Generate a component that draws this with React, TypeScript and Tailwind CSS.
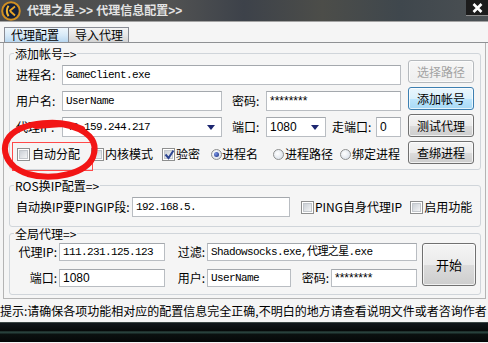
import React from "react";

// Proxy config window — title bar, two tabs, three group boxes, status line

const monoCls = "font-['Liberation_Mono','Noto_Sans_CJK_SC',monospace] text-[11px] tracking-[-0.6px] leading-none";
const sansCls = "font-['Liberation_Sans','Noto_Sans_CJK_SC',sans-serif] text-[12px] leading-none";

function Lbl({ className = "", children }: { className?: string; children: React.ReactNode }) {
  return <span className={`shrink-0 whitespace-nowrap text-[12px] leading-none text-black ${className}`}>{children}</span>;
}

function Input({
  className = "",
  text,
  font = "mono",
  arrow = false,
}: {
  className?: string;
  text: string;
  font?: "mono" | "sans";
  arrow?: boolean;
}) {
  return (
    <div
      className={`flex h-full shrink-0 items-center border border-[#b9bdc2] border-t-[#a4a8ad] bg-white pl-[3px] ${className}`}
    >
      <span className={`whitespace-nowrap ${font === "mono" ? monoCls : sansCls}`}>{text}</span>
      {arrow && (
        <svg className="ml-auto mr-[6px]" width="8" height="5" viewBox="0 0 8 5">
          <path d="M0 0 H8 L4 5 Z" fill="#1c2670" />
        </svg>
      )}
    </div>
  );
}

function Button({
  className = "",
  children,
  kind = "normal",
}: {
  className?: string;
  children: React.ReactNode;
  kind?: "normal" | "hot" | "disabled";
}) {
  const look =
    kind === "hot"
      ? "border-[#3c7fb1] bg-[linear-gradient(#eaf6fd,#d9f0fc_50%,#bee6fd_51%,#a7d9f5)] text-black"
      : kind === "disabled"
        ? "border-[#b5b9bd] bg-[linear-gradient(#f6f6f6,#efefef)] text-[#a3a3a3]"
        : "border-[#707070] bg-[linear-gradient(#f4f4f4,#ebebeb_50%,#dcdcdc_51%,#cdcdcd)] text-black";
  return (
    <div
      className={`flex shrink-0 items-center justify-center rounded-[3px] border text-[12px] leading-none shadow-[inset_0_0_0_1px_rgba(255,255,255,0.7)] ${look} ${className}`}
    >
      {children}
    </div>
  );
}

function Check({ checked = false }: { checked?: boolean }) {
  return (
    <span className="flex h-[13px] w-[13px] shrink-0 items-center justify-center border border-[#8e8f8f] bg-white">
      <span className="relative flex h-[9px] w-[9px] items-center justify-center border border-[#c3c7cc] bg-[linear-gradient(135deg,#cbd0d6,#f3f4f5)]">
        {checked && (
          <svg className="absolute -left-[1px] -top-[2px]" width="11" height="11" viewBox="0 0 11 11">
            <path d="M1.5 5.5 L4.5 9 L9.5 1.5" fill="none" stroke="#2d4592" strokeWidth="2" />
          </svg>
        )}
      </span>
    </span>
  );
}

function Radio({ on = false }: { on?: boolean }) {
  return (
    <span className="flex h-[11px] w-[11px] shrink-0 items-center justify-center rounded-full border border-[#8e8f8f] bg-[radial-gradient(circle_at_40%_40%,#ffffff,#d2dae5)]">
      {on && <span className="h-[5px] w-[5px] rounded-full bg-[radial-gradient(circle_at_35%_35%,#7b98e6,#10237a)]" />}
    </span>
  );
}

function Group({ label, className = "", children }: { label: string; className?: string; children: React.ReactNode }) {
  return (
    <div className={`rounded-[3px] border border-[#d0d5da] ${className}`}>
      <div className="-mt-[7px] ml-[4px] w-fit bg-[#f5f5f5] px-[1px] text-[12px] leading-[13px] text-black">{label}</div>
      {children}
    </div>
  );
}

export default function App() {
  return (
    <div className="relative h-[343px] w-[488px] overflow-hidden bg-[#f5f5f5] font-['Noto_Sans_CJK_SC',sans-serif] text-black">
      {/* Title bar */}
      <div className="flex h-[22px] items-center border-b border-[#a3a3a3] bg-[linear-gradient(90deg,#4c4c4c,#515252_35%,#3d424a_50%,#4c4d49_66%,#3f474d_82%,#4b5053)]">
        <svg className="ml-[1px]" width="20" height="20" viewBox="0 0 20 20">
          <circle cx="10" cy="10" r="8.8" fill="#15203a" stroke="#d08f22" strokeWidth="2" />
          <path d="M7.5 4.8 Q4.2 10 7.5 15.2" fill="none" stroke="#f2b632" strokeWidth="2" />
          <path d="M8.5 10 L14 5.5 M9 10 L14 14.5" fill="none" stroke="#e9a528" strokeWidth="1.8" />
        </svg>
        <span className="ml-[6px] whitespace-nowrap font-['Liberation_Sans','Noto_Sans_CJK_SC',sans-serif] text-[12px] font-bold leading-none text-[#e3e3e3]">
          {"代理之星->> 代理信息配置>>"}
        </span>
        <div className="ml-auto flex h-[16px] w-[22px] items-center justify-center self-start border-b border-[#8d8d8d] bg-[#1c1c1c]">
          <svg width="11" height="10" viewBox="0 0 11 10">
            <path d="M1.5 1 L9.5 9 M9.5 1 L1.5 9" stroke="#ffffff" strokeWidth="2.6" />
          </svg>
        </div>
      </div>

      {/* Tabs */}
      <div className="flex h-[21px] items-end border-b border-[#8f9194] pl-[4px]">
        <div className="flex h-[15px] w-[65px] items-center border border-b-0 border-[#898c95] bg-[linear-gradient(#eef6fc,#d8eaf8_50%,#b9d7f0)] pl-[6px] text-[12px] leading-none">
          代理配置
        </div>
        <div className="flex h-[15px] w-[60px] items-center border border-b-0 border-l-0 border-[#898c95] bg-[linear-gradient(#f4f4f4,#e7e7e7_50%,#d3d3d3)] pl-[6px] text-[12px] leading-none">
          导入代理
        </div>
      </div>

      {/* Panel */}
      <div className="ml-[3px] w-[483px] border-x border-b border-[#b4b4b4] pb-[3px] pl-[5px] pr-[4px] pt-[10px]">
        <Group label="添加帐号=>">
          <div className="flex pb-[5px] pl-[6px] pr-[5px]">
            <div className="mt-[5px] flex w-[385px] flex-col gap-[6px]">
              <div className="flex h-[20px] items-center">
                <Lbl className="w-[46px]">进程名:</Lbl>
                <Input className="w-[339px]" text="GameClient.exe" />
              </div>
              <div className="flex h-[20px] items-center">
                <Lbl className="w-[46px]">用户名:</Lbl>
                <Input className="w-[160px]" text="UserName" />
                <Lbl className="ml-[10px] w-[34px]">密码:</Lbl>
                <Input className="w-[135px]" text="********" font="sans" />
              </div>
              <div className="flex h-[20px] items-center">
                <Lbl className="w-[46px]">代理IP:</Lbl>
                <Input className="w-[160px]" text="42.159.244.217" arrow />
                <Lbl className="ml-[10px] w-[34px]">端口:</Lbl>
                <Input className="w-[60px]" text="1080" font="sans" arrow />
                <Lbl className="ml-[6px] w-[44px]">走端口:</Lbl>
                <Input className="w-[25px]" text="0" font="sans" />
              </div>
              <div className="mt-[1px] flex h-[20px] items-center text-[12px] leading-none">
                <span className="ml-[1px] flex items-center gap-[2px]">
                  <Check />
                  自动分配
                </span>
                <span className="ml-[11px] flex items-center gap-[1px]">
                  <Check />
                  内核模式
                </span>
                <span className="ml-[9px] flex items-center gap-[1px]">
                  <Check checked />
                  验密
                </span>
                <span className="ml-[11px] flex items-center">
                  <Radio on />
                  进程名
                </span>
                <span className="ml-[15px] flex items-center gap-[1px]">
                  <Radio />
                  进程路径
                </span>
                <span className="ml-[7px] flex items-center gap-[1px]">
                  <Radio />
                  绑定进程
                </span>
              </div>
            </div>
            <div className="ml-[7px] flex flex-col gap-[4px]">
              <Button className="h-[23px] w-[66px]" kind="disabled">选择路径</Button>
              <Button className="h-[23px] w-[66px]" kind="hot">添加帐号</Button>
              <Button className="h-[23px] w-[66px]">测试代理</Button>
              <Button className="h-[23px] w-[66px]">查绑进程</Button>
            </div>
          </div>
        </Group>

        <Group label="ROS换IP配置=>" className="mt-[15px]">
          <div className="mt-[5px] flex h-[20px] items-center pl-[6px] text-[12px] leading-none">
            <Lbl className="w-[116px]">自动换IP要PINGIP段:</Lbl>
            <Input className="w-[158px]" text="192.168.5." />
            <span className="ml-[11px] flex items-center gap-[1px]">
              <Check />
              PING自身代理IP
            </span>
            <span className="ml-[8px] flex items-center gap-[1px]">
              <Check />
              启用功能
            </span>
          </div>
          <div className="h-[9px]" />
        </Group>

        <Group label="全局代理=>" className="mt-[6px]">
          <div className="mt-[3px] flex pb-[7px] pl-[6px] pr-[3px]">
            <div className="flex flex-col gap-[8px]">
              <div className="flex h-[18px] items-center">
                <Lbl className="w-[41px] text-right">代理IP:</Lbl>
                <Input className="ml-[2px] w-[106px]" text="111.231.125.123" />
                <Lbl className="w-[40px] text-right">过滤:</Lbl>
                <Input className="ml-[2px] w-[210px]" text="Shadowsocks.exe,代理之星.exe" />
              </div>
              <div className="flex h-[18px] items-center">
                <Lbl className="w-[41px] text-right">端口:</Lbl>
                <Input className="ml-[2px] w-[106px]" text="1080" font="sans" />
                <Lbl className="w-[40px] text-right">用户:</Lbl>
                <Input className="ml-[2px] w-[84px]" text="UserName" />
                <Lbl className="w-[38px] text-right">密码:</Lbl>
                <Input className="ml-[2px] w-[86px]" text="********" font="sans" />
              </div>
            </div>
            <Button className="ml-[5px] h-[43px] w-[54px] text-[13px]">开始</Button>
          </div>
        </Group>
      </div>

      {/* Status line */}
      <div className="flex h-[23px] items-center whitespace-nowrap text-[12px] leading-none">
        提示:请确保各项功能相对应的配置信息完全正确,不明白的地方请查看说明文件或者咨询作者
      </div>

      {/* Dark strip of the window below */}
      <div className="h-[20px] border-t border-[#3b4644] bg-[linear-gradient(#10161a,#070a0a_40%,#20332f_45%,#2a4640_52%,#0b1110_58%,#050707)]" />

      {/* Hand-drawn red marking */}
      <svg className="pointer-events-none absolute left-0 top-0" width="488" height="343" viewBox="0 0 488 343">
        <rect x="12.5" y="142.5" width="80" height="28" fill="none" stroke="#ff4a4a" strokeWidth="1" />
        <path
          d="M82 129 C62 119 22 121 9 137 C1 148 4 166 28 174 C52 181 86 174 93 157 C99 141 88 129 62 124 L36 126"
          fill="none"
          stroke="#f21515"
          strokeWidth="6"
          strokeLinecap="round"
        />
      </svg>
    </div>
  );
}
